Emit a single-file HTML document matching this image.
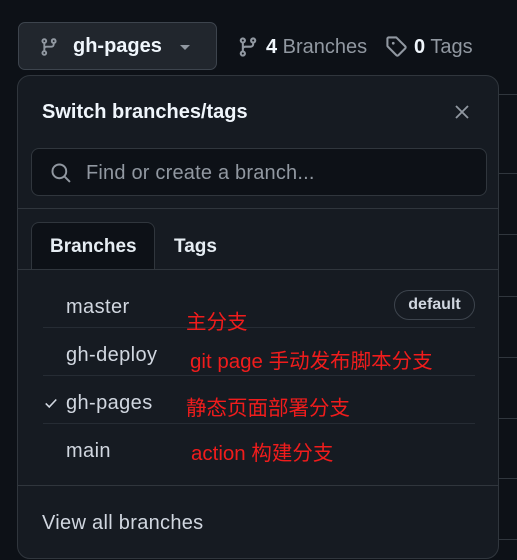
<!DOCTYPE html>
<html><head><meta charset="utf-8"><style>
*{box-sizing:border-box;margin:0;padding:0}
body{width:517px;height:560px;background:#0d1117;overflow:hidden;position:relative;font-family:"Liberation Sans","Noto Sans CJK SC",sans-serif;color:#e6edf3}
.a{position:absolute}
.hl{position:absolute;left:498px;right:0;height:1px;background:#30363d}
.btn{left:18px;top:22px;width:199px;height:48px;background:#21262d;border:1px solid #3d444d;border-radius:7px}
.panel{left:17px;top:75px;width:482px;height:484px;background:#161b22;border:1px solid #30363d;border-radius:13px;overflow:hidden}
.sep{position:absolute;left:25px;width:432px;height:1px;background:#262c34}
.item{position:absolute;left:48px;font-size:20px;letter-spacing:0.4px;color:#d1d7e0}
.red{position:absolute;color:#f01c1c;font-size:20.5px;font-family:"Liberation Sans","Noto Sans CJK SC",sans-serif}
</style></head><body>
<div class="hl" style="top:94px"></div><div class="hl" style="top:173px"></div><div class="hl" style="top:234px"></div><div class="hl" style="top:296px"></div><div class="hl" style="top:357px"></div><div class="hl" style="top:418px"></div><div class="hl" style="top:478px"></div><div class="hl" style="top:539px"></div>
<div class="a btn">
<svg class="a" style="left:20px;top:14px" width="20" height="20" viewBox="0 0 16 16" fill="#9198a1"><path d="M9.5 3.25a2.25 2.25 0 1 1 3 2.122V6A2.5 2.5 0 0 1 10 8.5H6a1 1 0 0 0-1 1v1.128a2.251 2.251 0 1 1-1.5 0V5.372a2.25 2.25 0 1 1 1.5 0v1.836A2.493 2.493 0 0 1 6 7h4a1 1 0 0 0 1-1v-.628A2.25 2.25 0 0 1 9.5 3.25Zm-6 0a.75.75 0 1 0 1.5 0 .75.75 0 0 0-1.5 0Zm8.25-.75a.75.75 0 1 0 0 1.5.75.75 0 0 0 0-1.5ZM4.25 12a.75.75 0 1 0 0 1.5.75.75 0 0 0 0-1.5Z"/></svg>
<div class="a" style="left:54px;top:12px;font-size:20px;font-weight:bold;color:#f0f6fc">gh-pages</div>
<div class="a" style="left:161px;top:22px;width:0;height:0;border-left:5px solid transparent;border-right:5px solid transparent;border-top:5px solid #9198a1"></div>
</div>
<svg class="a" style="left:237px;top:36px" width="22" height="22" viewBox="0 0 16 16" fill="#9198a1"><path d="M9.5 3.25a2.25 2.25 0 1 1 3 2.122V6A2.5 2.5 0 0 1 10 8.5H6a1 1 0 0 0-1 1v1.128a2.251 2.251 0 1 1-1.5 0V5.372a2.25 2.25 0 1 1 1.5 0v1.836A2.493 2.493 0 0 1 6 7h4a1 1 0 0 0 1-1v-.628A2.25 2.25 0 0 1 9.5 3.25Zm-6 0a.75.75 0 1 0 1.5 0 .75.75 0 0 0-1.5 0Zm8.25-.75a.75.75 0 1 0 0 1.5.75.75 0 0 0 0-1.5ZM4.25 12a.75.75 0 1 0 0 1.5.75.75 0 0 0 0-1.5Z"/></svg>
<div class="a" style="left:266px;top:36px;font-size:20px;color:#9198a1"><b style="color:#f0f6fc">4</b> Branches</div>
<svg class="a" style="left:385px;top:35px" width="22" height="22" viewBox="0 0 16 16" fill="#9198a1"><path d="M1 7.775V2.75C1 1.784 1.784 1 2.75 1h5.025c.464 0 .91.184 1.238.513l6.25 6.25a1.75 1.75 0 0 1 0 2.474l-5.026 5.026a1.75 1.75 0 0 1-2.474 0l-6.25-6.25A1.752 1.752 0 0 1 1 7.775Zm1.5 0c0 .066.026.13.073.177l6.25 6.25a.25.25 0 0 0 .354 0l5.025-5.025a.25.25 0 0 0 0-.354l-6.25-6.25a.25.25 0 0 0-.177-.073H2.75a.25.25 0 0 0-.25.25ZM6 5a1 1 0 1 1 0 2 1 1 0 0 1 0-2Z"/></svg>
<div class="a" style="left:414px;top:36px;font-size:20px;color:#9198a1"><b style="color:#f0f6fc">0</b> Tags</div>
<div class="a panel">
<div class="a" style="left:24px;top:25px;font-size:20px;font-weight:bold;color:#f0f6fc">Switch branches/tags</div>
<svg class="a" style="left:436px;top:28px" width="16" height="16" viewBox="0 0 16 16" stroke="#9198a1" stroke-width="1.8" fill="none"><path d="M2 2L14 14M14 2L2 14"/></svg>
<div class="a" style="left:13px;top:72px;width:456px;height:48px;background:#0d1117;border:1px solid #30363d;border-radius:8px">
<svg class="a" style="left:18px;top:13px" width="22" height="22" viewBox="0 0 16 16" fill="none" stroke="#9198a1" stroke-width="1.4"><circle cx="6.8" cy="6.8" r="5"/><path d="M10.5 10.5L14.5 14.5"/></svg>
<div class="a" style="left:54px;top:13px;font-size:20px;letter-spacing:0.2px;color:#9198a1">Find or create a branch...</div>
</div>
<div class="a" style="left:0;top:132px;width:100%;height:1px;background:#30363d"></div>
<div class="a" style="left:13px;top:146px;width:124px;height:48px;background:#0d1117;border:1px solid #30363d;border-bottom:none;border-radius:8px 8px 0 0"></div>
<div class="a" style="left:32px;top:160px;font-size:19px;font-weight:bold;color:#e6edf3">Branches</div>
<div class="a" style="left:156px;top:160px;font-size:19px;font-weight:bold;color:#e6edf3">Tags</div>
<div class="a" style="left:0;top:193px;width:100%;height:1px;background:#30363d"></div>
<div class="item" style="top:220px">master</div>
<div class="a" style="left:376px;top:214px;width:81px;height:30px;border:1px solid #3d444d;border-radius:15px;font-size:16px;font-weight:bold;color:#d1d7e0;text-align:center;line-height:28px">default</div>
<div class="sep" style="top:251px"></div>
<div class="item" style="top:268px">gh-deploy</div>
<div class="sep" style="top:299px"></div>
<svg class="a" style="left:26px;top:320px" width="14" height="14" viewBox="0 0 16 16" fill="none" stroke="#d1d7e0" stroke-width="1.8"><path d="M2 8.5L6 12.5L14 4"/></svg>
<div class="item" style="top:316px">gh-pages</div>
<div class="sep" style="top:347px"></div>
<div class="item" style="top:364px">main</div>
<div class="a" style="left:0;top:409px;width:100%;height:1px;background:#30363d"></div>
<div class="a" style="left:24px;top:436px;font-size:20px;letter-spacing:0.3px;color:#d1d7e0">View all branches</div>
<div class="red" style="left:168px;top:229px">主分支</div>
<div class="red" style="left:172px;top:268px">git page 手动发布脚本分支</div>
<div class="red" style="left:168px;top:315px">静态页面部署分支</div>
<div class="red" style="left:173px;top:360px">action 构建分支</div>
</div>
</body></html>
